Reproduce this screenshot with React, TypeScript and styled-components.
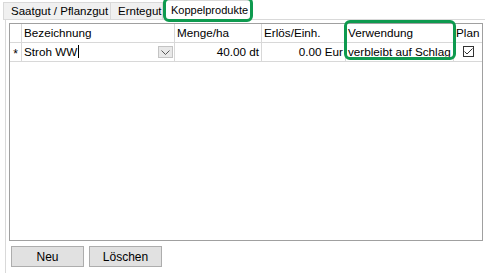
import styled, { createGlobalStyle } from 'styled-components'

const GlobalStyle = createGlobalStyle`
  html, body {
    margin: 0;
    padding: 0;
    background: #ffffff;
  }
  body {
    font-family: 'Liberation Sans', Arial, sans-serif;
    font-size: 12px;
    color: #000;
  }
`

const TABS = [
  { label: 'Saatgut / Pflanzgut', width: 108 },
  { label: 'Erntegut', width: 53 },
  { label: 'Koppelprodukte', width: 86 },
]

const COLUMNS = [
  { title: 'Bezeichnung', width: 153 },
  { title: 'Menge/ha', width: 87 },
  { title: 'Erlös/Einh.', width: 84 },
  { title: 'Verwendung', width: 108 },
  { title: 'Plan', width: 28 },
]

const Root = styled.div`
  width: 485px;
  height: 273px;
  overflow: hidden;
  padding-left: 3px;
  box-sizing: border-box;
`

const TabStrip = styled.div`
  display: flex;
  align-items: flex-end;
  height: 20px;
  position: relative;
  z-index: 1;
`

const Tab = styled.div<{ $active?: boolean; $w: number }>`
  position: relative;
  box-sizing: border-box;
  width: ${(p) => p.$w}px;
  height: ${(p) => (p.$active ? 20 : 18)}px;
  padding: ${(p) => (p.$active ? '2px 0 0 5px' : '1px 0 0 7px')};
  margin-left: ${(p) => (p.$active ? '2px' : '-1px')};
  background: ${(p) => (p.$active ? '#ffffff' : '#f0f0f0')};
  border: 1px solid #d9d9d9;
  border-bottom: ${(p) => (p.$active ? 'none' : '1px solid #d9d9d9')};
  font-size: ${(p) => (p.$active ? 11 : 11.5)}px;
  line-height: 15px;
  white-space: nowrap;

  &:first-child {
    margin-left: 0;
  }
`

const Highlight = styled.div<{ $inset: string }>`
  position: absolute;
  z-index: 2;
  inset: ${(p) => p.$inset};
  border: 3px solid #0e9a4f;
  border-radius: 6px;
  pointer-events: none;
`

const Panel = styled.div`
  box-sizing: border-box;
  height: 260px;
  margin-left: 2px;
  margin-top: -1px;
  border-top: 1px solid #d9d9d9;
  border-left: 1px solid #d9d9d9;
  padding: 3px 2px 0 3px;
  display: flex;
  flex-direction: column;
  gap: 5px;
`

const Grid = styled.div`
  box-sizing: border-box;
  width: 474px;
  height: 218px;
  border: 1px solid #a0a0a0;
  background: #fff;
`

const Row = styled.div`
  display: flex;
  height: 18px;
  border-bottom: 1px solid #d8d8d8;
`

const RowHead = styled.div`
  box-sizing: border-box;
  width: 12px;
  flex: none;
  border-right: 1px solid #d8d8d8;
  display: flex;
  align-items: center;
  justify-content: center;
  font-size: 12px;
  padding-top: 3px;
`

const Cell = styled.div<{ $w: number; $align?: string }>`
  position: relative;
  box-sizing: border-box;
  width: ${(p) => p.$w}px;
  flex: none;
  border-right: 1px solid #d8d8d8;
  padding: 0 2px 0 2px;
  font-size: 11.7px;
  line-height: 18px;
  white-space: nowrap;
  text-align: ${(p) => p.$align || 'left'};

  &:last-child {
    border-right: none;
  }
`

const Caret = styled.span`
  display: inline-block;
  width: 1px;
  height: 13px;
  background: #000;
  vertical-align: -2px;
  margin-left: 1px;
`

const DropButton = styled.div`
  position: absolute;
  right: 1px;
  top: 3px;
  width: 15px;
  height: 12px;
  box-sizing: border-box;
  background: #e8e8e8;
  border: 1px solid #c4c4c4;
  display: flex;
  align-items: center;
  justify-content: center;
`

const CheckBox = styled.div`
  margin: 3px auto 0;
  width: 11px;
  height: 11px;
  box-sizing: border-box;
  border: 1px solid #333;
  display: flex;
  align-items: center;
  justify-content: center;
`

const ButtonRow = styled.div`
  display: flex;
  gap: 5px;
  padding-left: 2px;
`

const Button = styled.button`
  width: 73px;
  height: 21px;
  box-sizing: border-box;
  background: #e1e1e1;
  border: 1px solid #adadad;
  font-family: inherit;
  font-size: 12px;
  color: #000;
  padding: 0;
`

export default function App() {
  return (
    <Root>
      <GlobalStyle />
      <TabStrip>
        {TABS.map((t, i) => (
          <Tab key={t.label} $w={t.width} $active={i === 2}>
            {t.label}
            {i === 2 && <Highlight $inset="-4px -3px -2px -3px" />}
          </Tab>
        ))}
      </TabStrip>
      <Panel>
        <Grid>
          <Row>
            <RowHead />
            {COLUMNS.map((c, i) => (
              <Cell key={c.title} $w={c.width}>
                {c.title}
                {i === 3 && <Highlight $inset="-4px -3px -18px -2px" />}
              </Cell>
            ))}
          </Row>
          <Row>
            <RowHead>*</RowHead>
            <Cell $w={COLUMNS[0].width}>
              Stroh WW
              <Caret />
              <DropButton>
                <svg width="9" height="5" viewBox="0 0 9 5">
                  <path d="M0.5 0.5 L4.5 4.5 L8.5 0.5" fill="none" stroke="#555" strokeWidth="1" />
                </svg>
              </DropButton>
            </Cell>
            <Cell $w={COLUMNS[1].width} $align="right">40.00 dt</Cell>
            <Cell $w={COLUMNS[2].width} $align="right">0.00 Eur</Cell>
            <Cell $w={COLUMNS[3].width}>verbleibt auf Schlag</Cell>
            <Cell $w={COLUMNS[4].width}>
              <CheckBox>
                <svg width="9" height="7" viewBox="0 0 9 7">
                  <path d="M0.5 3.5 L3 6 L8.5 0.5" fill="none" stroke="#333" strokeWidth="1" />
                </svg>
              </CheckBox>
            </Cell>
          </Row>
        </Grid>
        <ButtonRow>
          <Button>Neu</Button>
          <Button>Löschen</Button>
        </ButtonRow>
      </Panel>
    </Root>
  )
}
